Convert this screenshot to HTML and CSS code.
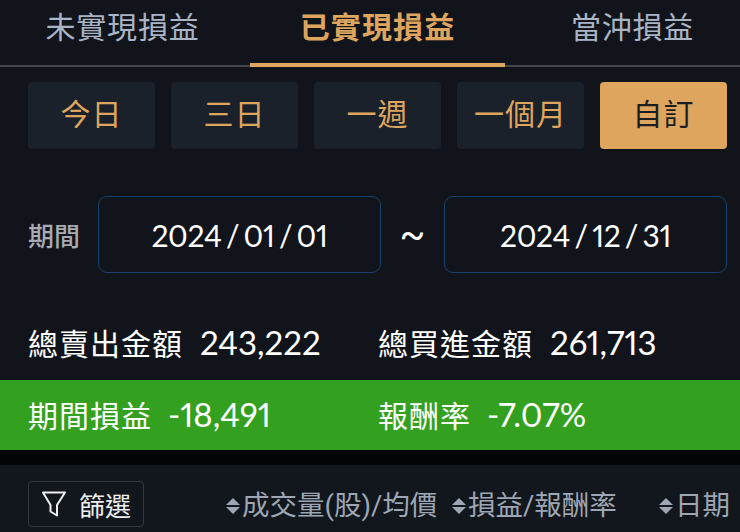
FILE: index.html
```html
<!DOCTYPE html>
<html lang="zh-Hant">
<head>
<meta charset="utf-8">
<title>已實現損益</title>
<link rel="stylesheet" href="styles.css">
</head>
<body>
<div class="page">
  <nav class="tabs">
    <div class="tab">未實現損益</div>
    <div class="tab active">已實現損益</div>
    <div class="tab">當沖損益</div>
  </nav>
  <div class="ranges">
    <div class="range">今日</div>
    <div class="range">三日</div>
    <div class="range">一週</div>
    <div class="range">一個月</div>
    <div class="range selected">自訂</div>
  </div>
  <div class="period">
    <span class="period-label">期間</span>
    <div class="date">2024 / 01 / 01</div>
    <span class="tilde">~</span>
    <div class="date">2024 / 12 / 31</div>
  </div>
  <div class="totals">
    <div class="cell"><span class="name">總賣出金額</span><span class="num">243,222</span></div>
    <div class="cell"><span class="name">總買進金額</span><span class="num">261,713</span></div>
  </div>
  <div class="pnl">
    <div class="cell"><span class="name">期間損益</span><span class="num">-18,491</span></div>
    <div class="cell"><span class="name">報酬率</span><span class="num">-7.07%</span></div>
  </div>
  <div class="band"></div>
  <div class="toolbar">
    <div class="filter">
      <svg class="funnel" viewBox="0 0 24 26" width="24" height="26" aria-hidden="true"><path d="M1 1.5H23L15 14V24.5L8.5 20.5V14Z"/></svg>
      <span>篩選</span>
    </div>
    <div class="sorts">
      <div class="sort s1"><span class="arrows"></span>成交量(股)/均價</div>
      <div class="sort s2"><span class="arrows"></span>損益/報酬率</div>
      <div class="sort s3"><span class="arrows"></span>日期</div>
    </div>
  </div>
</div>
</body>
</html>
```
FILE: styles.css
```css
* { box-sizing: border-box; }
html, body { margin: 0; padding: 0; }
body {
  background: #11141a;
  font-family: Roboto, "Noto Sans CJK TC", sans-serif;
  overflow: hidden;
}
.page { width: 740px; height: 532px; overflow: hidden; display: flex; flex-direction: column; }

.tabs { display: flex; height: 67px; margin-left: -5px; width: 765px; border-bottom: 2px solid #44474c; flex: none; }
.tab {
  width: 255px; height: 67px; text-align: center;
  font-size: 30px; line-height: 56px; color: #a9b4c6; letter-spacing: 0.8px;
}
.tab.active { color: #dea55f; font-weight: 700; letter-spacing: 1.1px; border-bottom: 4px solid #dea55f; }

.ranges { display: flex; gap: 16px; padding: 15px 0 0 28px; flex: none; }
.range {
  width: 127px; height: 67px; border-radius: 4px; background: #1a212b; color: #dea55f;
  font-size: 30px; line-height: 65px; text-align: center; letter-spacing: 1px;
}
.range.selected { background: #dea55f; color: #1a1d22; }

.period { display: flex; align-items: center; padding: 47px 0 0 28px; flex: none; }
.period-label { width: 70px; font-size: 26px; font-weight: 500; color: #a7abb1; }
.date {
  width: 283px; height: 77px; border: 1px solid #17406f; border-radius: 9px;
  color: #fff; font-family: Lato, "Noto Sans CJK TC", sans-serif; font-feature-settings: "pnum";
  font-size: 30px; letter-spacing: -0.3px; word-spacing: -3px; line-height: 77px; text-align: center;
}
.tilde { width: 63px; text-align: center; color: #fff; font-size: 38px; line-height: 1; }

.totals, .pnl { display: flex; padding-left: 28px; flex: none; }
.totals { padding-top: 47px; height: 107px; color: #fff; }
.pnl { height: 70px; background: #33a11f; color: #fff; align-items: center; padding-bottom: 2px; }
.cell { width: 350px; display: flex; align-items: baseline; gap: 17px; }
.pnl .cell { gap: 16px; }
.cell .name { font-size: 30px; letter-spacing: 1px; }
.num { font-family: Lato, "Noto Sans CJK TC", sans-serif; font-feature-settings: "pnum"; font-size: 33px; }

.band { height: 15px; background: #030405; flex: none; }
.toolbar { flex: 1; background: #12161d; display: flex; padding: 16px 13px 0 28px; justify-content: space-between; }
.filter {
  width: 116px; height: 46px; border: 1px solid #353a42; border-radius: 4px;
  display: flex; align-items: center; gap: 13px; padding-left: 13px;
  color: #eceef0; font-size: 26px;
}
.funnel { fill: none; stroke: #eceef0; stroke-width: 2; stroke-linejoin: round; flex: none; }
.sorts { position: relative; flex: 1; }
.sort { position: absolute; top: 7px; display: flex; align-items: center; font-size: 27.5px; color: #9ea6b3; white-space: nowrap; line-height: 36px; }
.s1 { left: 82px; }
.s2 { left: 308px; }
.s3 { left: 515px; }
.arrows { position: relative; width: 14px; height: 16px; margin-right: 2px; }
.arrows::before, .arrows::after { content: ""; position: absolute; left: 0; border-left: 7px solid transparent; border-right: 7px solid transparent; }
.arrows::before { top: 0; border-bottom: 7px solid #9ea6b3; }
.arrows::after { bottom: 0; border-top: 7px solid #9ea6b3; }
```
